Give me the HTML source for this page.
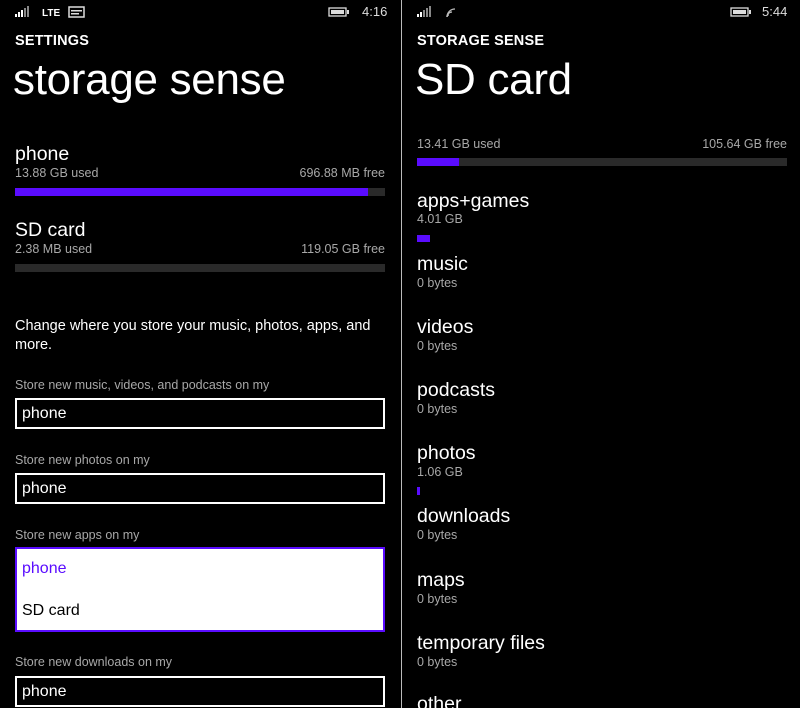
<!DOCTYPE html>
<html><head><meta charset="utf-8"><style>
*{margin:0;padding:0;box-sizing:border-box}
html,body{width:800px;height:708px;overflow:hidden}
body{background:#000;color:#fff;font-family:"Liberation Sans","DejaVu Sans",sans-serif;position:relative}
.a{position:absolute;white-space:nowrap}
.g{color:#a8a8a8;font-size:12.5px}
.h{font-size:14.5px;font-weight:bold;letter-spacing:.2px}
.big{font-size:44px;letter-spacing:-0.3px}
.m{font-size:19.5px}
.bar{position:absolute;height:8px;background:#2a2a2a}
.bar i{display:block;height:100%;background:#5a0cff}
.box{position:absolute;left:15px;width:370px;height:31px;border:2px solid #fff;font-size:16px;padding:5px 0 0 5px}
</style></head><body>
<div class="a" style="left:401px;top:0;width:1px;height:708px;background:#bbb"></div>
<svg class="a" style="left:15px;top:6px" width="70" height="12"><rect x="0" y="8" width="2" height="3" fill="#fff"/><rect x="3" y="6" width="2" height="5" fill="#fff"/><rect x="6" y="4" width="2" height="7" fill="#fff"/><rect x="9" y="2" width="2" height="9" fill="#888"/><rect x="12" y="0" width="2" height="11" fill="#888"/><text x="27" y="10" fill="#fff" font-size="10" font-weight="bold" font-family="Liberation Sans">LTE</text><rect x="54" y="1" width="15" height="10" fill="none" stroke="#ddd" stroke-width="1.5"/><rect x="56" y="4" width="11" height="1.5" fill="#ddd"/><rect x="56" y="7" width="8" height="1.5" fill="#ddd"/></svg>
<svg class="a" style="left:328px;top:7px" width="22" height="10"><rect x="1" y="1" width="17" height="8" fill="none" stroke="#ddd" stroke-width="1.3"/><rect x="3" y="3" width="13" height="4" fill="#ddd"/><rect x="19" y="3" width="2" height="4" fill="#ddd"/></svg>
<div class="a" style="left:362px;top:4px;font-size:13px;color:#ddd">4:16</div>
<div class="a h" style="left:15px;top:33px">SETTINGS</div>
<div class="a big" style="left:13px;top:55px">storage sense</div>
<div class="a m" style="left:15px;top:143px">phone</div>
<div class="a g" style="left:15px;top:166px">13.88 GB used</div>
<div class="a g" style="right:415px;top:166px">696.88 MB free</div>
<div class="bar" style="left:15px;top:188px;width:370px"><i style="width:353px"></i></div>
<div class="a m" style="left:15px;top:219px">SD card</div>
<div class="a g" style="left:15px;top:242px">2.38 MB used</div>
<div class="a g" style="right:415px;top:242px">119.05 GB free</div>
<div class="bar" style="left:15px;top:264px;width:370px"></div>
<div class="a" style="left:15px;top:317px;font-size:14.5px;line-height:19px">Change where you store your music, photos, apps, and<br>more.</div>
<div class="a g" style="left:15px;top:378px">Store new music, videos, and podcasts on my</div>
<div class="box" style="top:398px">phone</div>
<div class="a g" style="left:15px;top:453px">Store new photos on my</div>
<div class="box" style="top:473px">phone</div>
<div class="a g" style="left:15px;top:528px">Store new apps on my</div>
<div class="a" style="left:15px;top:547px;width:370px;height:85px;background:#fff;border:2px solid #5a0cff">
<div class="a" style="left:5px;top:11px;font-size:16px;color:#5a0cff">phone</div>
<div class="a" style="left:5px;top:53px;font-size:16px;color:#000">SD card</div></div>
<div class="a g" style="left:15px;top:655px">Store new downloads on my</div>
<div class="box" style="top:676px">phone</div>
<svg class="a" style="left:417px;top:6px" width="40" height="12"><rect x="0" y="8" width="2" height="3" fill="#fff"/><rect x="3" y="6" width="2" height="5" fill="#fff"/><rect x="6" y="4" width="2" height="7" fill="#888"/><rect x="9" y="2" width="2" height="9" fill="#888"/><rect x="12" y="0" width="2" height="11" fill="#888"/><g fill="none" stroke="#bbb" stroke-width="1.3"><path d="M30 11a2 2 0 0 1 2-2"/><path d="M30 11a5 5 0 0 1 5-5"/><path d="M30 11a8 8 0 0 1 8-8"/></g></svg>
<svg class="a" style="left:730px;top:7px" width="22" height="10"><rect x="1" y="1" width="17" height="8" fill="none" stroke="#ddd" stroke-width="1.3"/><rect x="3" y="3" width="13" height="4" fill="#ddd"/><rect x="19" y="3" width="2" height="4" fill="#ddd"/></svg>
<div class="a" style="left:762px;top:4px;font-size:13px;color:#ddd">5:44</div>
<div class="a h" style="left:417px;top:33px">STORAGE SENSE</div>
<div class="a big" style="left:415px;top:55px">SD card</div>
<div class="a g" style="left:417px;top:137px">13.41 GB used</div>
<div class="a g" style="right:13px;top:137px">105.64 GB free</div>
<div class="bar" style="left:417px;top:158px;width:370px"><i style="width:42px"></i></div>
<div class="a m" style="left:417px;top:190px">apps+games</div><div class="a g" style="left:417px;top:212px">4.01 GB</div>
<div class="a" style="left:417px;top:235px;width:13px;height:7px;background:#5a0cff"></div>
<div class="a m" style="left:417px;top:253px">music</div><div class="a g" style="left:417px;top:276px">0 bytes</div>
<div class="a m" style="left:417px;top:316px">videos</div><div class="a g" style="left:417px;top:339px">0 bytes</div>
<div class="a m" style="left:417px;top:379px">podcasts</div><div class="a g" style="left:417px;top:402px">0 bytes</div>
<div class="a m" style="left:417px;top:442px">photos</div><div class="a g" style="left:417px;top:465px">1.06 GB</div>
<div class="a" style="left:417px;top:487px;width:3px;height:8px;background:#5a0cff"></div>
<div class="a m" style="left:417px;top:505px">downloads</div><div class="a g" style="left:417px;top:528px">0 bytes</div>
<div class="a m" style="left:417px;top:569px">maps</div><div class="a g" style="left:417px;top:592px">0 bytes</div>
<div class="a m" style="left:417px;top:632px">temporary files</div><div class="a g" style="left:417px;top:655px">0 bytes</div>
<div class="a m" style="left:417px;top:693px">other</div>
</body></html>
